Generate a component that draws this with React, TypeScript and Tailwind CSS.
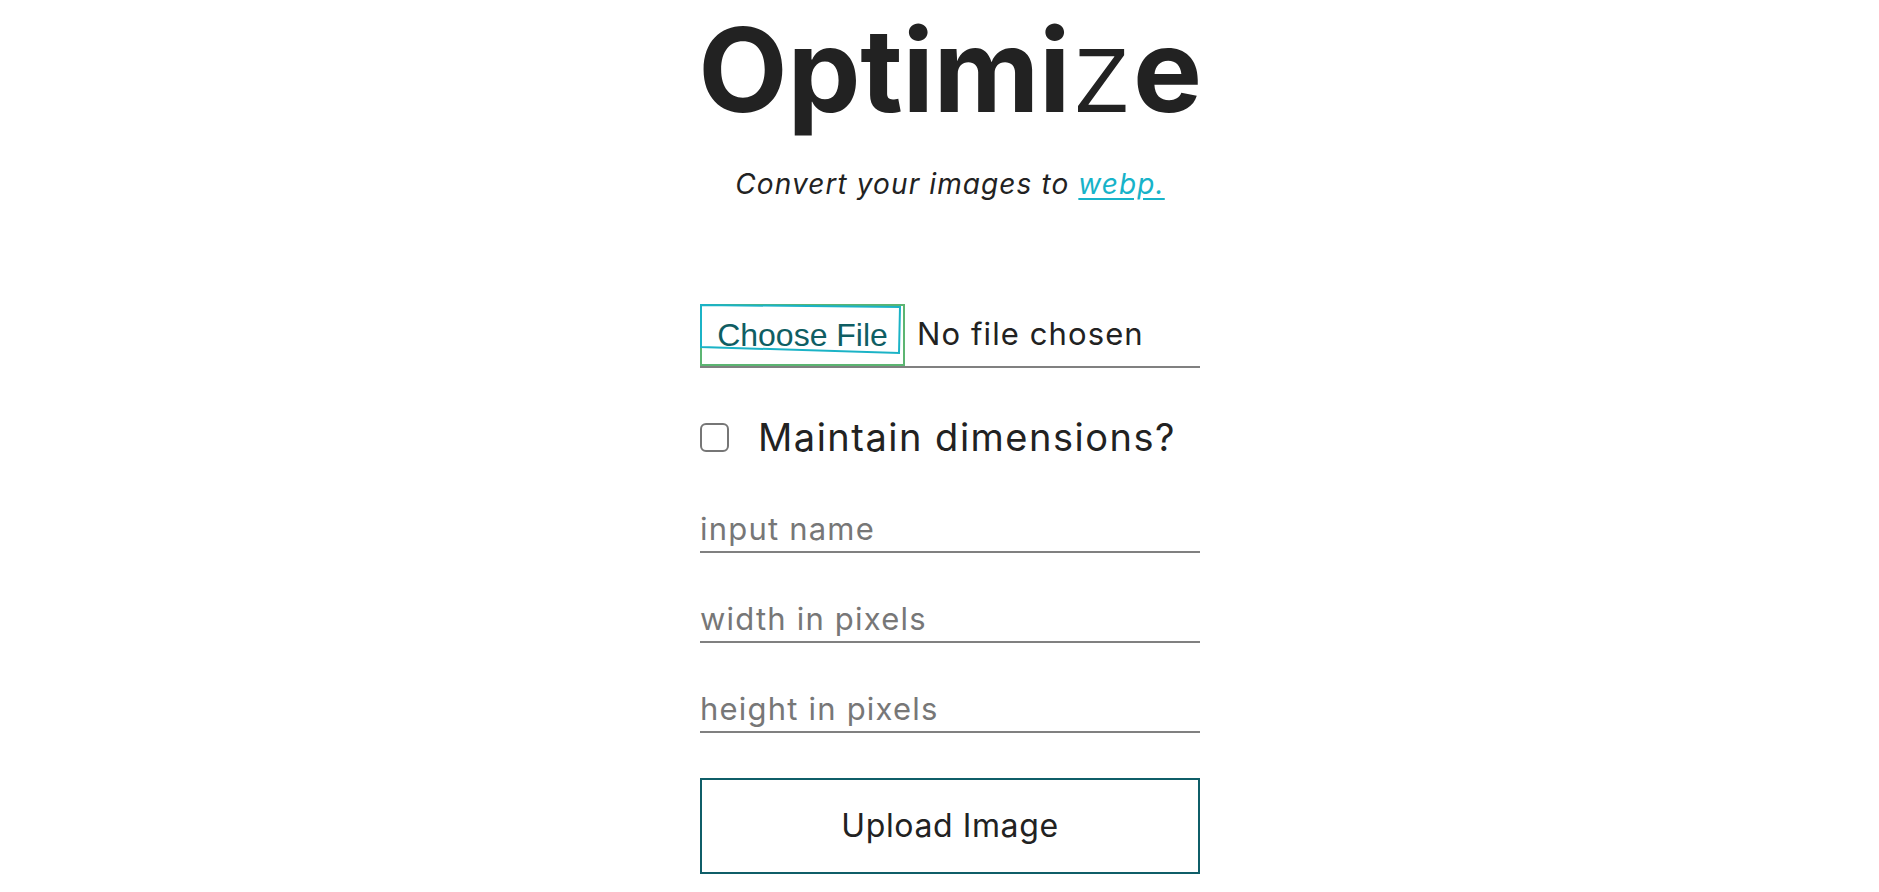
import React from "react";

const grotesk = "font-['Inter','Noto_Sans',sans-serif]";

export default function App() {
  return (
    <div className={`min-h-screen w-full bg-white text-[#222222] ${grotesk}`}>
      <header className="flex flex-col items-center pl-[21px]">
        <h1 className="mt-[12px] text-[116px] font-bold leading-none tracking-[-0.3px]">
          Optimi<span className="font-light">z</span>e
        </h1>
        <p className="mt-[42px] text-[28px] italic leading-none tracking-[1.1px]">
          Convert your images to{" "}
          <a href="#" className="text-[#17b3c9] underline underline-offset-4">
            webp.
          </a>
        </p>
      </header>

      <form className="flex justify-center pl-[21px]" onSubmit={(e) => e.preventDefault()}>
        <div className="mt-[106px] flex w-[500px] flex-col">
          <FilePicker />

          <label className="mt-[50px] flex items-center gap-[29px]">
            <input
              type="checkbox"
              className="h-[29px] w-[29px] appearance-none rounded-[6px] border-2 border-[#767676] bg-white"
            />
            <span className="text-[38px] leading-none tracking-[1.5px]">Maintain dimensions?</span>
          </label>

          <UnderlineInput placeholder="input name" className="mt-[54px]" />
          <UnderlineInput placeholder="width in pixels" className="mt-[47px]" />
          <UnderlineInput placeholder="height in pixels" className="mt-[47px]" />

          <button
            type="submit"
            className="mt-[45px] h-[96px] w-full border-2 border-[#0f5e68] bg-white text-[32px] tracking-[0.6px] text-[#222222]"
          >
            Upload Image
          </button>
        </div>
      </form>
    </div>
  );
}

function FilePicker() {
  return (
    <div className="flex items-end border-b-2 border-[#808080]">
      <div className="relative flex h-[62px] w-[205px] items-center justify-center border-2 border-[#5cb572]">
        <span className="font-['Liberation_Sans',Arial,sans-serif] text-[32px] leading-none text-[#0f5e63]">
          Choose File
        </span>
        <svg
          className="pointer-events-none absolute -left-[2px] -top-[2px]"
          width="205"
          height="62"
          viewBox="0 0 205 62"
          fill="none"
        >
          <path d="M1 1 L200 3 L199 49 L1 43 Z" stroke="#1bb3c6" strokeWidth="2" />
        </svg>
      </div>
      <span className="mb-[17px] ml-[12px] text-[31px] leading-none tracking-[1.1px]">No file chosen</span>
    </div>
  );
}

function UnderlineInput({ placeholder, className }: { placeholder: string; className?: string }) {
  return (
    <input
      type="text"
      placeholder={placeholder}
      className={`w-full border-b-2 border-[#808080] bg-transparent pb-[4px] text-[31px] leading-none tracking-[1.2px] outline-none placeholder:text-[#777777] ${className ?? ""}`}
    />
  );
}
